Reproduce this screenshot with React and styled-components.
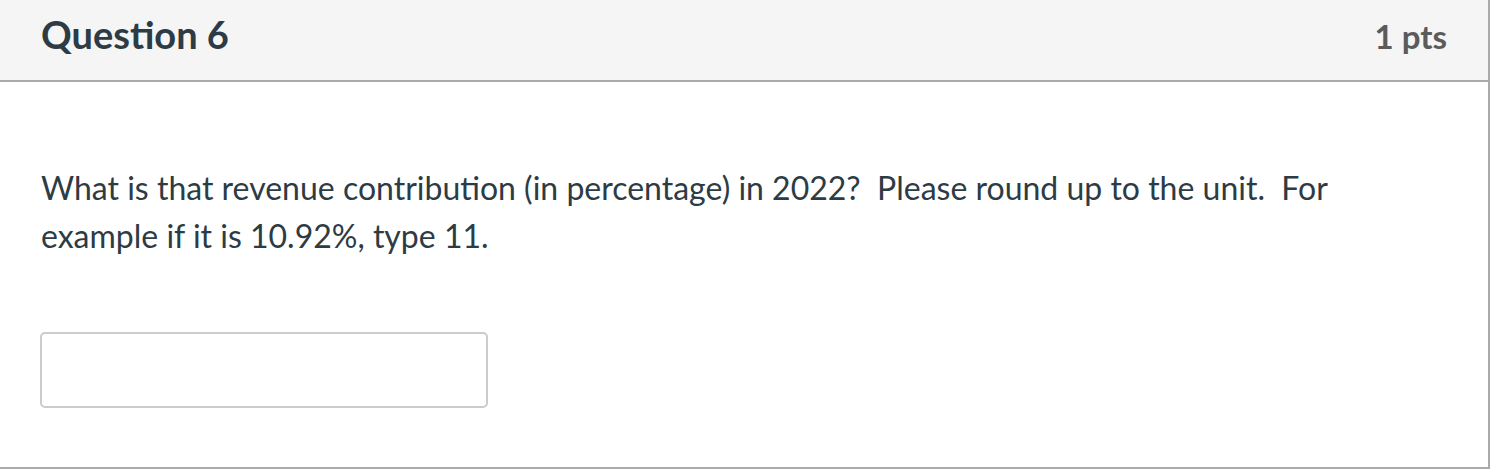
import React from 'react'
import styled, { createGlobalStyle } from 'styled-components'

const GlobalStyle = createGlobalStyle`
  html, body {
    margin: 0;
    padding: 0;
    background: #fff;
  }
  body {
    font-family: Lato, "Open Sans", "Liberation Sans", sans-serif;
    color: #2d3b45;
  }
`

const Card = styled.div`
  width: 1488px;
  border-right: 2px solid #aaaaaa;
  border-bottom: 2px solid #aaaaaa;
  background: #fff;
`

const Header = styled.div`
  height: 82px;
  box-sizing: border-box;
  display: flex;
  justify-content: space-between;
  align-items: baseline;
  padding: 11px 41px 0 41px;
  background: #f5f5f5;
  border-bottom: 2px solid #aaaaaa;
`

const Title = styled.div`
  font-size: 38px;
  font-weight: 700;
  line-height: 46px;
  color: #2d3b45;
`

const Points = styled.div`
  font-size: 33px;
  font-weight: 700;
  line-height: 46px;
  color: #5b5b5b;
`

const Body = styled.div`
  height: 385px;
  box-sizing: border-box;
  padding: 82px 41px 0 41px;
`

const Text = styled.p`
  margin: 0;
  max-width: 1320px;
  font-size: 32px;
  line-height: 48px;
  color: #2d3b45;
`

const AnswerInput = styled.input`
  display: block;
  margin-top: 72px;
  margin-left: -1px;
  width: 448px;
  height: 76px;
  box-sizing: border-box;
  border: 2px solid #cccccc;
  border-radius: 5px;
  background: #fff;
  font-family: inherit;
  font-size: 24px;
  padding: 0 12px;
  outline: none;
`

export default function App() {
  return (
    <>
      <GlobalStyle />
      <Card>
        <Header>
          <Title>Question 6</Title>
          <Points>1 pts</Points>
        </Header>
        <Body>
          <Text>
            What is that revenue contribution (in percentage) in 2022?{'\u00a0 '}Please round up to the unit.{'\u00a0 '}For example if it is 10.92%, type 11.
          </Text>
          <AnswerInput type="text" aria-label="Answer" />
        </Body>
      </Card>
    </>
  )
}
